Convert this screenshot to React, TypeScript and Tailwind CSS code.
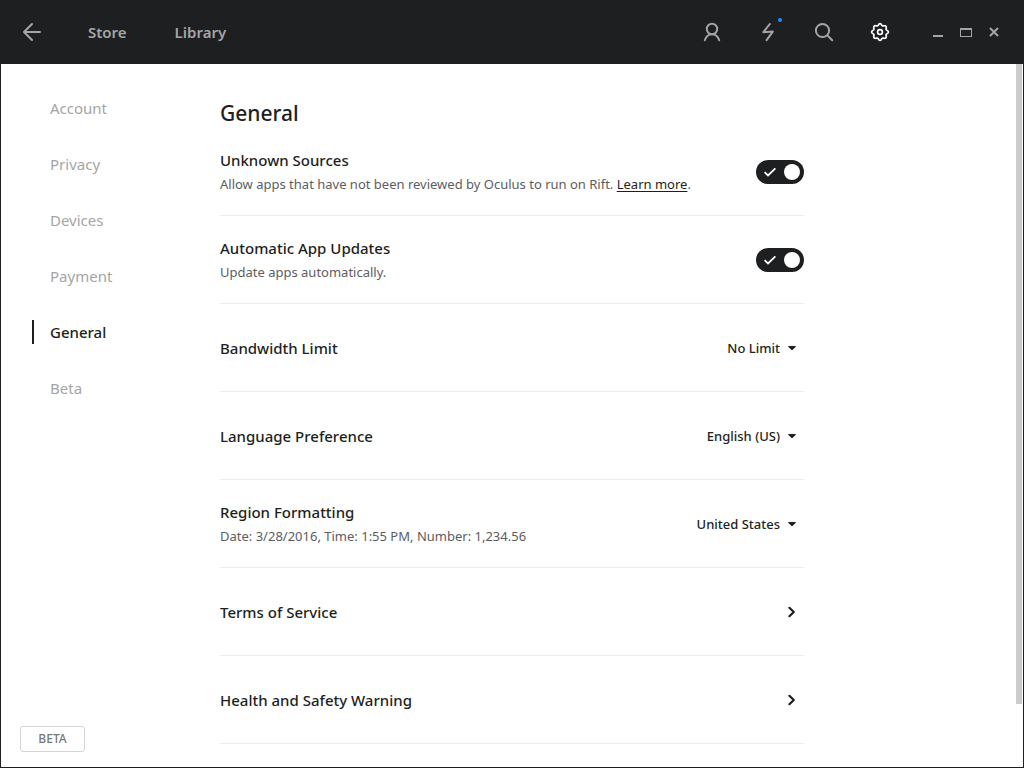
import React, { useState } from "react";

const navItems = ["Account", "Privacy", "Devices", "Payment", "General", "Beta"];

const iconProps = {
  width: 24,
  height: 24,
  viewBox: "0 0 24 24",
  fill: "none",
  stroke: "currentColor",
  strokeWidth: 2,
  strokeLinecap: "round" as const,
  strokeLinejoin: "round" as const,
  "aria-hidden": true,
};

function IconButton({ label, active, children }: { label: string; active?: boolean; children: React.ReactNode }) {
  return (
    <button
      type="button"
      aria-label={label}
      className={active ? "relative size-6 text-white" : "relative size-6 text-[#a5a5a6]"}
    >
      {children}
    </button>
  );
}

function gearPath() {
  const points: string[] = [];
  for (let i = 0; i <= 96; i++) {
    const a = (i / 96) * Math.PI * 2;
    const r = 7.5 + 0.85 * Math.cos(a * 8);
    points.push(`${(12 + r * Math.sin(a)).toFixed(2)} ${(12 - r * Math.cos(a)).toFixed(2)}`);
  }
  return `M${points.join("L")}Z`;
}

function TopBar() {
  return (
    <header className="flex h-16 items-center bg-[#1e1f21] px-4 text-[#a5a5a6]">
      <button type="button" aria-label="Back" className="mx-1 size-6">
        <svg {...iconProps}>
          <path d="M20 12H4M12 4L4 12l8 8" />
        </svg>
      </button>
      <nav className="ml-10 flex gap-12 text-[15px] leading-6 font-semibold">
        <a href="#store">Store</a>
        <a href="#library">Library</a>
      </nav>
      <div className="ml-auto flex gap-8">
        <IconButton label="Profile">
          <svg {...iconProps}>
            <circle cx="12" cy="9" r="5.2" />
            <path d="M4.8 20.2c1.2-3.6 3.8-6 7.2-6s6 2.4 7.2 6" />
          </svg>
        </IconButton>
        <IconButton label="Notifications">
          <svg {...iconProps}>
            <path d="M13.8 4L7.4 12.2L16.8 11.6L10.6 20.2" />
          </svg>
          <span className="absolute -top-0.5 right-[-2px] size-1 rounded-full bg-[#1c8cff]" />
        </IconButton>
        <IconButton label="Search">
          <svg {...iconProps}>
            <circle cx="10.5" cy="10.5" r="6.6" />
            <path d="M15.4 15.4L20.2 20.2" />
          </svg>
        </IconButton>
        <IconButton label="Settings" active>
          <svg {...iconProps} strokeWidth={1.7}>
            <path d={gearPath()} />
            <circle cx="12" cy="12" r="2.4" />
          </svg>
        </IconButton>
      </div>
      <div className="ml-8 flex">
        <button type="button" aria-label="Minimize" className="flex h-6 w-7 items-center justify-center">
          <svg width="12" height="12" viewBox="0 0 12 12" fill="currentColor" aria-hidden="true">
            <path d="M1 9h10v2H1z" />
          </svg>
        </button>
        <button type="button" aria-label="Maximize" className="flex h-6 w-7 items-center justify-center">
          <svg width="12" height="12" viewBox="0 0 12 12" fill="currentColor" fillRule="evenodd" aria-hidden="true">
            <path d="M0 2h12v9H0zM1 4v6h10V4z" />
          </svg>
        </button>
        <button type="button" aria-label="Close" className="flex h-6 w-7 items-center justify-center">
          <svg width="12" height="12" viewBox="0 0 12 12" stroke="currentColor" strokeWidth="2" aria-hidden="true">
            <path d="M2 2l8 8M10 2l-8 8" />
          </svg>
        </button>
      </div>
    </header>
  );
}

function Row({
  id,
  title,
  description,
  children,
}: {
  id?: string;
  title: string;
  description?: React.ReactNode;
  children: React.ReactNode;
}) {
  return (
    <div className="flex min-h-22 items-center justify-between border-b border-[#ebebeb] pt-px">
      <div>
        {id ? (
          <label htmlFor={id} className="block text-[15px] leading-6 font-medium">
            {title}
          </label>
        ) : (
          <h2 className="text-[15px] leading-6 font-medium">{title}</h2>
        )}
        {description && <p className="text-[13px] leading-6 text-[#5c5d5f]">{description}</p>}
      </div>
      {children}
    </div>
  );
}

function Toggle({ id }: { id: string }) {
  const [on, setOn] = useState(true);
  return (
    <span className="relative flex h-6 w-12 shrink-0">
      <input
        id={id}
        type="checkbox"
        role="switch"
        checked={on}
        onChange={(e) => setOn(e.target.checked)}
        className="peer h-6 w-12 cursor-pointer appearance-none rounded-full bg-[#b4b4b5] checked:bg-[#1e1f21]"
      />
      <svg
        className="pointer-events-none absolute top-1.5 left-2"
        width="12"
        height="12"
        viewBox="0 0 12 12"
        fill="none"
        stroke="white"
        strokeWidth="1.8"
        aria-hidden="true"
      >
        <path d="M0.6 6.2L4 9.4L11.4 2.4" />
      </svg>
      <span className="pointer-events-none absolute top-1 left-1 size-4 rounded-full bg-white peer-checked:left-7" />
    </span>
  );
}

function Dropdown({ id, value }: { id: string; value: string }) {
  return (
    <span className="relative flex items-center">
      <select
        id={id}
        className="field-sizing-content cursor-pointer appearance-none bg-transparent pr-6 text-[13px] leading-6 font-medium"
      >
        <option>{value}</option>
      </select>
      <svg
        className="pointer-events-none absolute right-2"
        width="8"
        height="4"
        viewBox="0 0 8 4"
        fill="currentColor"
        aria-hidden="true"
      >
        <path d="M0.5 0h7L8 0.5 4.5 4h-1L0 0.5z" />
      </svg>
    </span>
  );
}

function OpenLink({ label }: { label: string }) {
  return (
    <a href="#open" aria-label={label} className="mr-2 flex">
      <svg width="10" height="12" viewBox="0 0 10 12" fill="none" stroke="currentColor" strokeWidth="2.2" aria-hidden="true">
        <path d="M3.4 1.8L7.8 6L3.4 10.2" strokeLinejoin="round" strokeLinecap="round" />
      </svg>
    </a>
  );
}

export default function App() {
  return (
    <div className="flex min-h-screen flex-col bg-white font-['Noto_Sans',sans-serif] text-[#1e1f21]">
      <TopBar />
      <div className="flex grow border border-t-0 border-[#1e1f21]">
        <aside className="flex w-[219px] shrink-0 flex-col justify-between pt-8 pb-[15px]">
          <nav className="ml-[31px] flex flex-col gap-8">
            {navItems.map((item) => (
              <a
                key={item}
                href={"#" + item.toLowerCase()}
                aria-current={item === "General" ? "page" : undefined}
                className={
                  item === "General"
                    ? "border-l-2 border-[#1e1f21] pl-4 text-[15px] leading-6 font-medium"
                    : "border-l-2 border-transparent pl-4 text-[15px] leading-6 text-[#a5a5a6]"
                }
              >
                {item}
              </a>
            ))}
          </nav>
          <button
            type="button"
            className="ml-[19px] h-[26px] w-[65px] rounded-[3px] border border-[#d4d4d5] text-xs font-medium text-[#78797a]"
          >
            BETA
          </button>
        </aside>
        <main className="max-w-[584px] grow pt-8">
          <h1 className="pt-0.5 text-[21px] leading-[30px] font-medium">General</h1>
          <Row
            id="unknown-sources"
            title="Unknown Sources"
            description={
              <>
                Allow apps that have not been reviewed by Oculus to run on Rift.{" "}
                <a href="#learn-more" className="text-[#1e1f21] underline underline-offset-2">
                  Learn more
                </a>
                .
              </>
            }
          >
            <Toggle id="unknown-sources" />
          </Row>
          <Row id="auto-updates" title="Automatic App Updates" description="Update apps automatically.">
            <Toggle id="auto-updates" />
          </Row>
          <Row id="bandwidth" title="Bandwidth Limit">
            <Dropdown id="bandwidth" value="No Limit" />
          </Row>
          <Row id="language" title="Language Preference">
            <Dropdown id="language" value="English (US)" />
          </Row>
          <Row
            id="region"
            title="Region Formatting"
            description="Date: 3/28/2016, Time: 1:55 PM, Number: 1,234.56"
          >
            <Dropdown id="region" value="United States" />
          </Row>
          <Row title="Terms of Service">
            <OpenLink label="Terms of Service" />
          </Row>
          <Row title="Health and Safety Warning">
            <OpenLink label="Health and Safety Warning" />
          </Row>
        </main>
        <div className="ml-auto w-[7px] shrink-0" aria-hidden="true">
          <div className="h-[91%] w-1.5 bg-[#cbcbcb]" />
        </div>
      </div>
    </div>
  );
}
